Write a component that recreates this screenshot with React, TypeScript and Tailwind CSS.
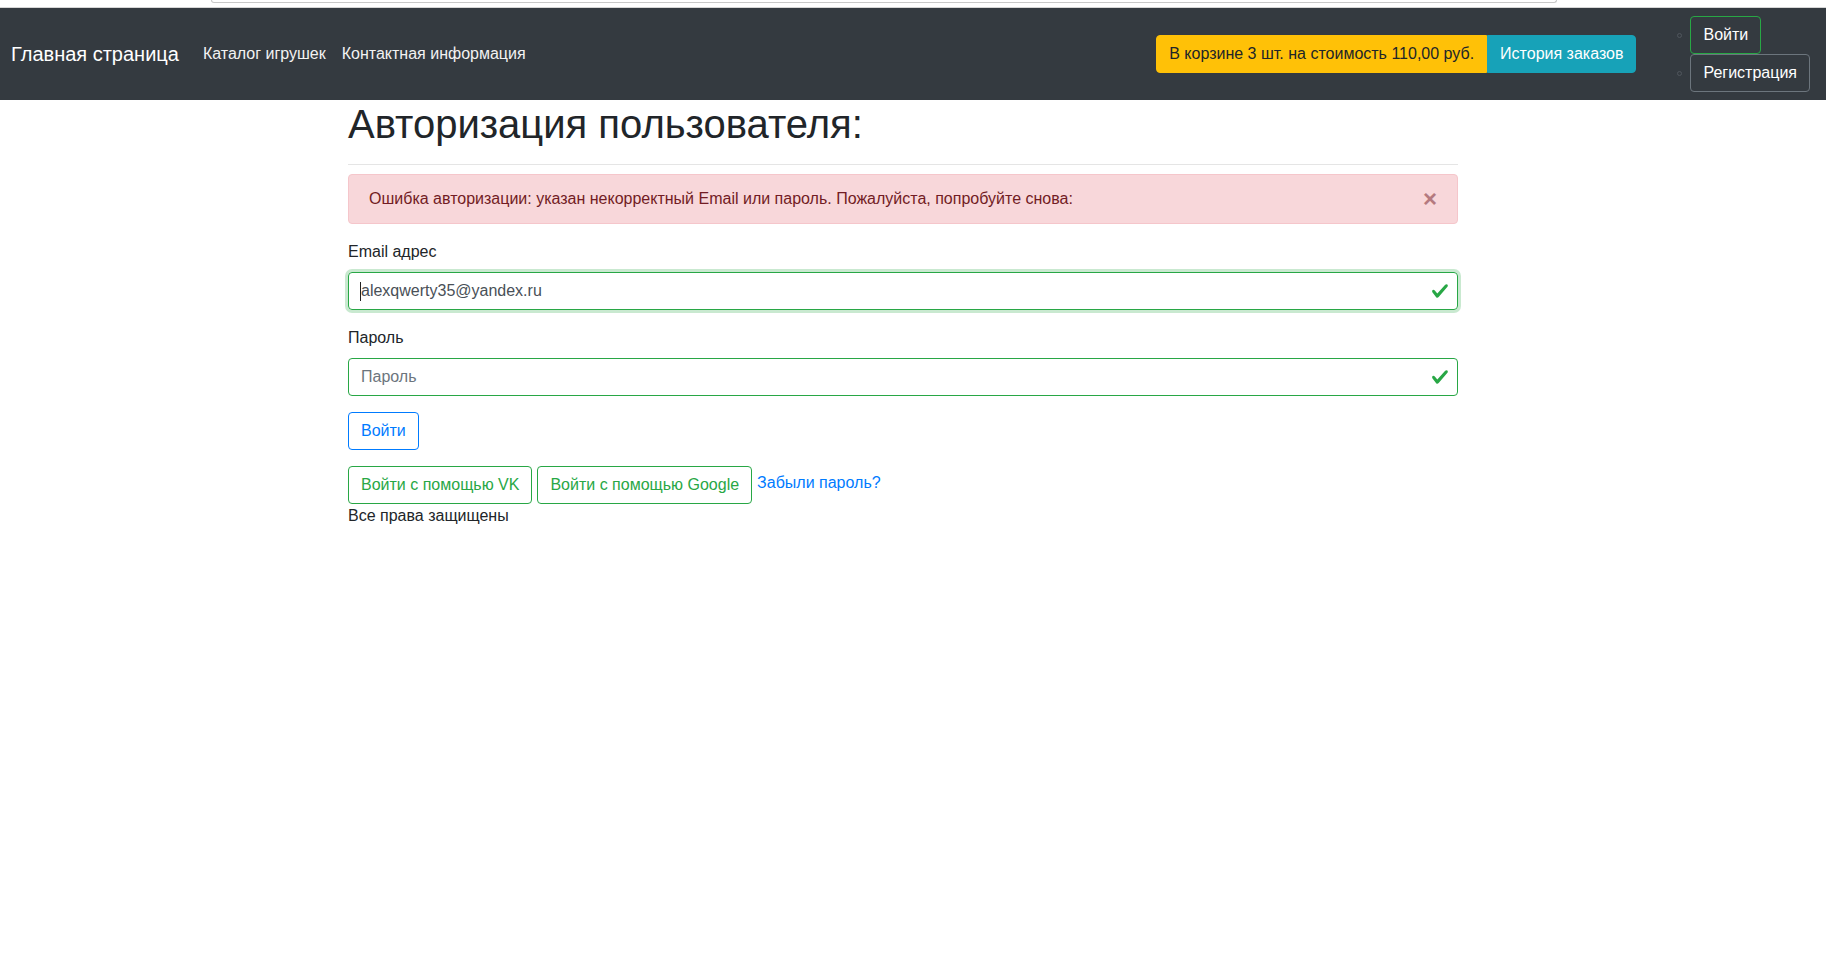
import React from 'react'

function CheckIcon() {
  return (
    <svg viewBox="0 0 8 8" className="absolute right-[9px] top-1/2 h-[18px] w-[18px] -translate-y-1/2">
      <path
        fill="#28a745"
        d="M2.3 6.73L.6 4.53c-.4-1.04.46-1.4 1.1-.8l1.1 1.4 3.4-3.8c.6-.63 1.6-.27 1.2.7l-4 4.6c-.43.5-.8.4-1.1.1z"
      />
    </svg>
  )
}

function NavBar() {
  return (
    <nav className="flex items-center bg-[#343a40] py-2 pl-[11px] pr-4">
      <a className="mr-4 text-[20px] leading-[30px] text-white">Главная страница</a>
      <a className="px-2 text-[16px] leading-6 text-[#f2f2f2]">Каталог игрушек</a>
      <a className="px-2 text-[16px] leading-6 text-[#f2f2f2]">Контактная информация</a>

      <div className="ml-auto flex items-center">
        <span className="flex h-[38px] items-center rounded-l-[4px] border border-[#ffc107] bg-[#ffc107] px-3 text-[16px] text-[#212529]">
          В корзине 3 шт. на стоимость 110,00 руб.
        </span>
        <button className="h-[38px] rounded-r-[4px] border border-[#17a2b8] bg-[#17a2b8] px-3 text-[16px] text-white">
          История заказов
        </button>
      </div>

      <ul className="ml-[41px] flex flex-col">
        <li className="flex items-center gap-[8px]">
          <span className="h-[5px] w-[5px] rounded-full border border-[#50565d]" />
          <button className="h-[38px] rounded-[4px] border border-[#28a745] px-3 text-[16px] text-white">
            Войти
          </button>
        </li>
        <li className="flex items-center gap-[8px]">
          <span className="h-[5px] w-[5px] rounded-full border border-[#50565d]" />
          <button className="h-[38px] rounded-[4px] border border-[#6c757d] px-3 text-[16px] text-white">
            Регистрация
          </button>
        </li>
      </ul>
    </nav>
  )
}

export default function App() {
  return (
    <div className="min-h-screen bg-white font-['Liberation_Sans',Arial,sans-serif] text-[#212529]">
      {/* browser strip above the page */}
      <div className="h-[8px] border-b border-[#d6d6d6] bg-white">
        <div className="ml-[211px] h-[3px] w-[1346px] rounded-b-[3px] border border-t-0 border-[#c8c8c8]" />
      </div>

      <NavBar />

      <main className="ml-[348px] w-[1110px]">
        <h1 className="text-[40px] font-normal leading-[48px]">Авторизация пользователя:</h1>
        <hr className="mt-4 border-t border-[#e5e5e5]" />

        <div className="relative mt-[9px] mb-4 rounded-[4px] border border-[#f5c6cb] bg-[#f8d7da] px-5 py-3 text-[16px] leading-6 text-[#721c24]">
          Ошибка авторизации: указан некорректный Email или пароль. Пожалуйста, попробуйте снова:
          <span className="absolute right-5 top-3 text-[24px] font-bold leading-6 text-[#b57a7f]">×</span>
        </div>

        <label className="mb-2 block text-[16px] leading-6">Email адрес</label>
        <div className="relative mb-4">
          <input
            defaultValue="alexqwerty35@yandex.ru"
            className="block h-[38px] w-full rounded-[4px] border border-[#28a745] px-3 pr-9 text-[16px] text-[#495057] shadow-[0_0_0_3px_rgba(40,167,69,0.25)] outline-none"
          />
          <span className="absolute left-[12px] top-[10px] h-[19px] w-px bg-[#222]" />
          <CheckIcon />
        </div>

        <label className="mb-2 block text-[16px] leading-6">Пароль</label>
        <div className="relative mb-4">
          <input
            type="password"
            placeholder="Пароль"
            className="block h-[38px] w-full rounded-[4px] border border-[#28a745] px-3 pr-9 text-[16px] text-[#495057] outline-none placeholder:text-[#6c757d]"
          />
          <CheckIcon />
        </div>

        <button className="mb-4 h-[38px] rounded-[4px] border border-[#007bff] px-3 text-[16px] text-[#007bff]">
          Войти
        </button>

        <div className="flex items-start gap-[5px]">
          <button className="h-[38px] rounded-[4px] border border-[#28a745] px-3 text-[16px] text-[#28a745]">
            Войти с помощью VK
          </button>
          <button className="h-[38px] rounded-[4px] border border-[#28a745] px-3 text-[16px] text-[#28a745]">
            Войти с помощью Google
          </button>
          <a className="mt-[5px] text-[16px] leading-6 text-[#007bff]">Забыли пароль?</a>
        </div>

        <p className="text-[16px] leading-6">Все права защищены</p>
      </main>
    </div>
  )
}
